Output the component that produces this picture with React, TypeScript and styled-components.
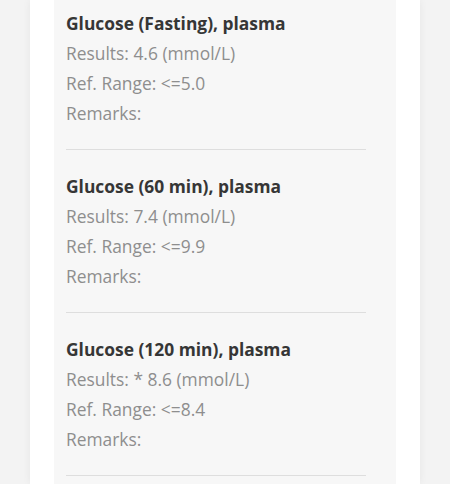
import React from "react";
import styled, { createGlobalStyle } from "styled-components";

const Global = createGlobalStyle`
  html, body { margin: 0; padding: 0; background: #f3f3f3; }
  body { font-family: "Open Sans", "Noto Sans", sans-serif; }
`;

const Page = styled.div`
  height: 484px;
  overflow: hidden;
  padding: 0 30px;
  background: #f3f3f3;
`;

const Card = styled.div`
  background: #ffffff;
  height: 100%;
  padding: 0 24px;
  box-shadow: 0 0 8px rgba(0, 0, 0, 0.06);
`;

const Panel = styled.div`
  background: #f7f7f7;
  height: 100%;
  padding: 0 30px 0 12px;
`;

const Item = styled.div`
  padding: 21px 0;
  border-bottom: 1px solid #dedede;
  &:first-child { padding-top: 8px; }
`;

const Title = styled.div`
  font-size: 17.4px;
  font-weight: 700;
  line-height: 30px;
  color: #363636;
`;

const Row = styled.div`
  font-size: 17.4px;
  line-height: 30px;
  color: #8e8e8e;
`;

const data = [
  { name: "Glucose (Fasting), plasma", result: "4.6 (mmol/L)", range: "<=5.0" },
  { name: "Glucose (60 min), plasma", result: "7.4 (mmol/L)", range: "<=9.9" },
  { name: "Glucose (120 min), plasma", result: "* 8.6 (mmol/L)", range: "<=8.4" },
];

export default function App() {
  return (
    <>
      <Global />
      <Page>
        <Card>
          <Panel>
            {data.map((d) => (
              <Item key={d.name}>
                <Title>{d.name}</Title>
                <Row>Results: {d.result}</Row>
                <Row>Ref. Range: {d.range}</Row>
                <Row>Remarks:</Row>
              </Item>
            ))}
          </Panel>
        </Card>
      </Page>
    </>
  );
}
